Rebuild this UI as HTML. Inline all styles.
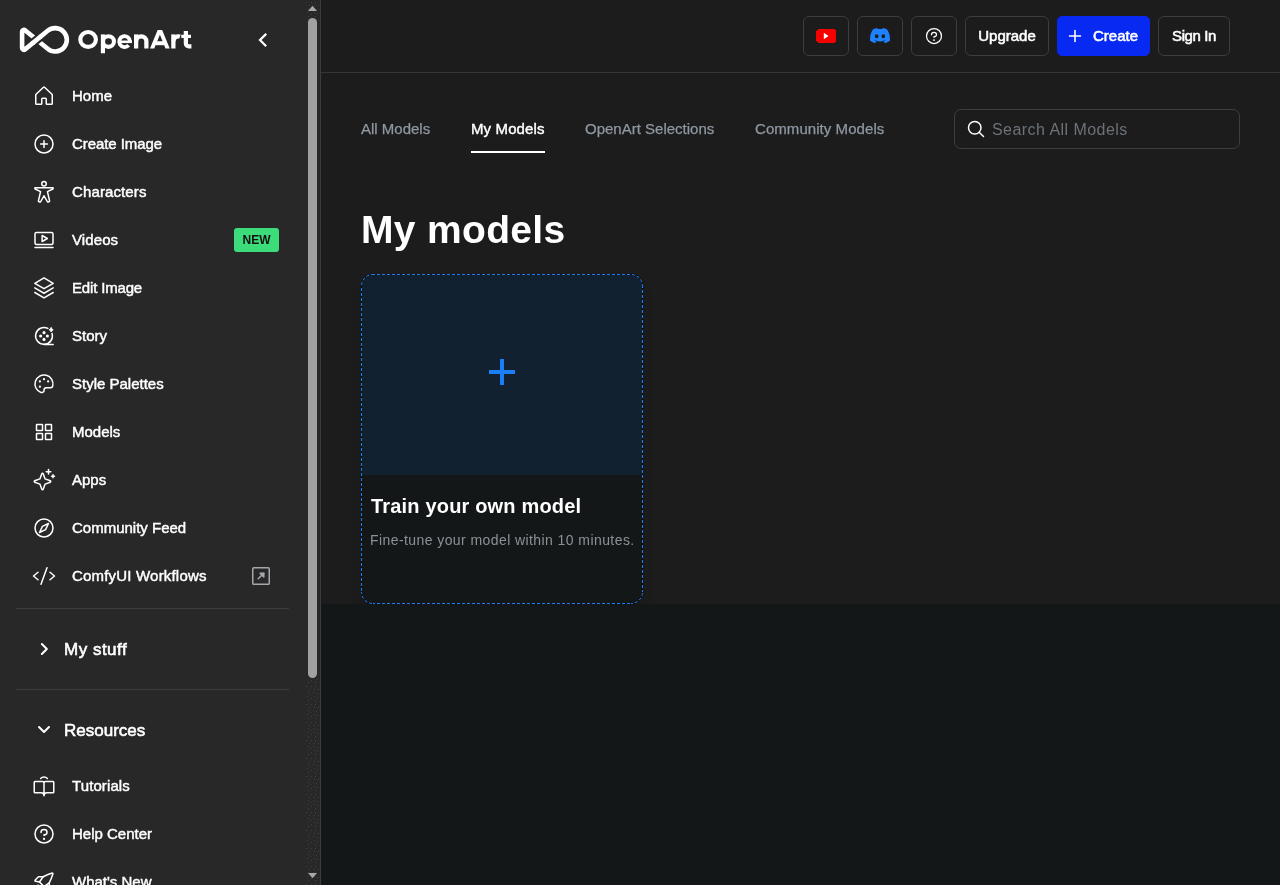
<!DOCTYPE html>
<html>
<head>
<meta charset="utf-8">
<title>My models - OpenArt</title>
<style>
*{box-sizing:border-box;margin:0;padding:0}
html,body{width:1280px;height:885px;overflow:hidden;background:#1c1c1c;font-family:"Liberation Sans",sans-serif;color:#fff}
.abs{position:absolute}
#side{position:absolute;left:0;top:0;width:320px;height:885px;background:#282828;overflow:hidden}
#sideborder{position:absolute;left:320px;top:0;width:1px;height:885px;background:#3a3d40}
#main{position:absolute;left:321px;top:0;width:959px;height:604px;background:#1c1c1c}
#foot{z-index:2;position:absolute;left:321px;top:604px;width:959px;height:281px;background:#131718}
#hline{position:absolute;left:321px;top:72px;width:959px;height:1px;background:#333638}
#logotxt{left:77px;top:22px;font-size:23.5px;line-height:34px;font-weight:bold;color:#fff;white-space:nowrap}
.nav{position:absolute;left:72px;font-size:15px;color:#fff;white-space:nowrap;line-height:20px;-webkit-text-stroke:0.45px #fff}
.ico{position:absolute;fill:none;stroke-linecap:round;stroke-linejoin:round;overflow:visible}
.sep{position:absolute;left:16px;width:273px;height:1px;background:#3b3e40}
.sec{position:absolute;left:64px;font-size:17px;line-height:22px;color:#fff;white-space:nowrap;-webkit-text-stroke:0.6px #fff}
.badge{position:absolute;left:234px;top:228px;width:45px;height:24px;border-radius:3px;background:#3ddc7a;color:#111;font-size:12px;font-weight:bold;line-height:24px;text-align:center}
.btn{position:absolute;top:16px;height:40px;border:1px solid #3b3e41;border-radius:6px;font-size:15px;line-height:38px;text-align:center;color:#fff;white-space:nowrap;-webkit-text-stroke:0.55px #fff}
#createbtn{background:#0829f2;border-color:#0829f2;border-radius:5px}
.btntxt{position:absolute;top:26px;font-size:15px;line-height:20px;color:#fff;white-space:nowrap;-webkit-text-stroke:0.55px #fff}
.tab{position:absolute;top:119px;font-size:15px;line-height:20px;color:#8f98a1;white-space:nowrap;-webkit-text-stroke:0.25px #8f98a1}
.tab.act{color:#fff;-webkit-text-stroke:0.4px #fff}
#search{left:954px;top:109px;width:286px;height:40px;border:1px solid #3b3e41;border-radius:7px}
#ph{left:992px;top:119px;font-size:16px;line-height:22px;color:#6c7278;white-space:nowrap;letter-spacing:0.45px}
#h1{left:361px;top:206px;font-size:39px;line-height:48px;font-weight:bold;color:#fff;white-space:nowrap;letter-spacing:0.33px}
#card{left:361px;top:274px;width:282px;height:330px;border-radius:12px;background:#0a0b0c;box-shadow:0 10px 15px -3px rgba(0,0,0,.12),0 4px 6px -4px rgba(0,0,0,.12)}
#cardin{position:absolute;left:1px;top:1px;width:280px;height:328px;border-radius:11px;background:#141718;overflow:hidden}
#cardtop{width:100%;height:200px;background:#12212f}
#ctitle{letter-spacing:0.18px;left:371px;top:494px;font-size:20px;line-height:24px;font-weight:bold;color:#fff;white-space:nowrap}
#csub{letter-spacing:0.42px;left:370px;top:530px;font-size:14px;line-height:20px;color:#8b9197;white-space:nowrap}

.nav,.sec,.btn,.btntxt,.tab,#ph,#h1,#ctitle,#csub,#logotxt,.badge{will-change:transform}

</style>
</head>
<body>
<div id="side">
<svg class="abs" style="left:14px;top:16px;width:70px;height:48px" viewBox="14 16 70 48" fill="none" stroke="#fff" stroke-width="4.6" stroke-linejoin="round" stroke-linecap="butt"><path d="M25.04,30.28 A1.8,1.8 0 0 0 22.10,31.67 L22.10,48.01 A1.8,1.8 0 0 0 25.04,49.40 L47.68,30.84 A11.7,11.7 0 1 1 47.68,48.84 Z"/><path d="M33.37,42.57 L40.03,37.11" stroke="#282828" stroke-width="8.8"/><path d="M32.37,43.39 L41.03,36.29"/></svg>
<svg class="abs" style="left:76px;top:24px;width:120px;height:34px" viewBox="76 24 120 34" fill="#fff" stroke="none">
<ellipse cx="88.1" cy="39.4" rx="7.8" ry="7.4" fill="none" stroke="#fff" stroke-width="4.15"/>
<rect x="100.85" y="34.4" width="4.15" height="18.85"/>
<ellipse cx="108.5" cy="41.55" rx="5.45" ry="5.3" fill="none" stroke="#fff" stroke-width="4.1"/>
<path d="M128.65,45.25 A5.45,5.45 0 1 1 130.05,41.6" fill="none" stroke="#fff" stroke-width="3.8"/>
<rect x="120.5" y="40.5" width="11.45" height="2.55"/>
<rect x="134" y="34.4" width="4.25" height="14.1"/>
<path d="M146.38,48.5 V41.5 A5.13,5.13 0 0 0 136.12,41.5" fill="none" stroke="#fff" stroke-width="4.25"/>
<path d="M150,48.5 L157.65,30 L162.15,30 L169.75,48.5 L165.55,48.5 L159.9,34.84 L154.25,48.5 Z"/>
<rect x="155.6" y="41.2" width="8.6" height="4"/>
<rect x="171.25" y="34.4" width="4.25" height="14.1"/>
<path d="M173.38,41.5 A5.13,5.13 0 0 1 180,36.59" fill="none" stroke="#fff" stroke-width="4.25"/>
<path d="M185.88,31 V43.5 A2.9,2.9 0 0 0 188.78,46.4 H191.4" fill="none" stroke="#fff" stroke-width="4.25"/>
<rect x="181.25" y="34.75" width="9.75" height="3.25"/>
</svg>
<svg class="abs" style="left:255px;top:32px;width:16px;height:16px;fill:none;stroke:#fff;stroke-width:2.2;stroke-linecap:square;stroke-linejoin:miter" viewBox="0 0 16 16"><polyline points="10.4 2.6 5 8 10.4 13.4"/></svg>
<svg class="ico" style="left:32px;top:84.0px;width:24px;height:24px;stroke:#fff;stroke-width:16;" viewBox="0 0 256 256"><path d="M152,208V160a8,8,0,0,0-8-8H112a8,8,0,0,0-8,8v48a8,8,0,0,1-8,8H48a8,8,0,0,1-8-8V115.54a8,8,0,0,1,2.62-5.92l80-75.54a8,8,0,0,1,10.77,0l80,75.54a8,8,0,0,1,2.62,5.92V208a8,8,0,0,1-8,8H160A8,8,0,0,1,152,208Z"/></svg>
<div class="nav" style="top:86px;letter-spacing:0px"><span>Home</span></div>
<svg class="ico" style="left:32px;top:132.0px;width:24px;height:24px;stroke:#fff;stroke-width:16;" viewBox="0 0 256 256"><circle cx="128" cy="128" r="96"/><line x1="92" y1="128" x2="164" y2="128"/><line x1="128" y1="92" x2="128" y2="164"/></svg>
<div class="nav" style="top:134px;letter-spacing:-0.08px"><span>Create Image</span></div>
<svg class="ico" style="left:32px;top:180.0px;width:24px;height:24px;stroke:#fff;stroke-width:16;" viewBox="0 0 256 256"><circle cx="128" cy="41" r="24"/><path d="M34,82 H222 Q230,89 222,96 L165,124 L188,226 Q178,240 164,232 L128,168 L92,232 Q78,240 68,226 L91,124 L34,96 Q26,89 34,82Z"/></svg>
<div class="nav" style="top:182px;letter-spacing:0.12px"><span>Characters</span></div>
<svg class="ico" style="left:32px;top:228.0px;width:24px;height:24px;stroke:#fff;stroke-width:16;" viewBox="0 0 256 256"><rect x="32" y="48" width="192" height="128" rx="16"/><line x1="32" y1="208" x2="224" y2="208"/><polygon points="108,80 164,112 108,144"/></svg>
<div class="nav" style="top:230px;letter-spacing:0.1px"><span>Videos</span></div>
<svg class="ico" style="left:32px;top:276.0px;width:24px;height:24px;stroke:#fff;stroke-width:16;" viewBox="0 0 256 256"><polyline points="30 176 128 234 226 176"/><polyline points="30 127 128 184 226 127"/><polygon points="30 78 128 135 226 78 128 20 30 78"/></svg>
<div class="nav" style="top:278px;letter-spacing:-0.17px"><span>Edit Image</span></div>
<svg class="ico" style="left:32px;top:324.0px;width:24px;height:24px;stroke:#fff;stroke-width:16;" viewBox="0 0 256 256"><path d="M170,47 A90,90 0 1 0 214,100"/><line x1="128" y1="218" x2="226" y2="218"/><circle cx="128" cy="92" r="16.5" fill="#fff" stroke="none"/><circle cx="92" cy="128" r="16.5" fill="#fff" stroke="none"/><circle cx="164" cy="128" r="16.5" fill="#fff" stroke="none"/><circle cx="128" cy="164" r="16.5" fill="#fff" stroke="none"/><path d="M204,40 Q209,57 226,62 Q209,67 204,84 Q199,67 182,62 Q199,57 204,40Z" fill="#fff" stroke-width="10"/></svg>
<div class="nav" style="top:326px;letter-spacing:0px"><span>Story</span></div>
<svg class="ico" style="left:32px;top:372.0px;width:24px;height:24px;stroke:#fff;stroke-width:16;" viewBox="0 0 256 256"><path d="M221.6,149.35A96,96,0,1,0,95.4,218.23c15.6,5.51,32.6-5.54,32.6-22.08V192a24,24,0,0,1,24-24h46.21A23.89,23.89,0,0,0,221.6,149.35Z"/><circle cx="128" cy="76" r="12" fill="#fff" stroke="none"/><circle cx="84" cy="100" r="12" fill="#fff" stroke="none"/><circle cx="84" cy="156" r="12" fill="#fff" stroke="none"/><circle cx="172" cy="100" r="12" fill="#fff" stroke="none"/></svg>
<div class="nav" style="top:374px;letter-spacing:0px"><span>Style Palettes</span></div>
<svg class="ico" style="left:32px;top:420.0px;width:24px;height:24px;stroke:#fff;stroke-width:16;" viewBox="0 0 256 256"><rect x="48" y="48" width="64" height="64" rx="4"/><rect x="144" y="48" width="64" height="64" rx="4"/><rect x="48" y="144" width="64" height="64" rx="4"/><rect x="144" y="144" width="64" height="64" rx="4"/></svg>
<div class="nav" style="top:422px;letter-spacing:0px"><span>Models</span></div>
<svg class="ico" style="left:32px;top:468.0px;width:24px;height:24px;stroke:#fff;stroke-width:16;" viewBox="0 0 256 256"><path d="M84.27,171.73l-55.09-20.3a7.92,7.92,0,0,1,0-14.86l55.09-20.3,20.3-55.09a7.92,7.92,0,0,1,14.86,0l20.3,55.09,55.09,20.3a7.92,7.92,0,0,1,0,14.86l-55.09,20.3-20.3,55.09a7.92,7.92,0,0,1-14.86,0Z"/><line x1="176" y1="16" x2="176" y2="64"/><line x1="200" y1="40" x2="152" y2="40"/><line x1="224" y1="72" x2="224" y2="104"/><line x1="240" y1="88" x2="208" y2="88"/></svg>
<div class="nav" style="top:470px;letter-spacing:0px"><span>Apps</span></div>
<svg class="ico" style="left:32px;top:516.0px;width:24px;height:24px;stroke:#fff;stroke-width:16;" viewBox="0 0 256 256"><circle cx="128" cy="128" r="96"/><polygon points="144.57 144.57 80 176 111.43 111.43 176 80 144.57 144.57"/></svg>
<div class="nav" style="top:518px;letter-spacing:0px"><span>Community Feed</span></div>
<svg class="ico" style="left:32px;top:564.0px;width:24px;height:24px;stroke:#fff;stroke-width:16;" viewBox="0 0 256 256"><polyline points="64 88 16 128 64 168"/><polyline points="192 88 240 128 192 168"/><line x1="160" y1="40" x2="96" y2="216"/></svg>
<div class="nav" style="top:566px;letter-spacing:0.19px"><span>ComfyUI Workflows</span></div>
<svg class="ico" style="left:32px;top:774.0px;width:24px;height:24px;stroke:#fff;stroke-width:16;" viewBox="0 0 256 256"><path d="M128,94 C128,86 122,80 112,80 H32 a8,8,0,0,0-8,8 V192 a8,8,0,0,0,8,8 H96 a32,32,0,0,1,32,32 V94 C128,86 134,80 144,80 H224 a8,8,0,0,1,8,8 V192 a8,8,0,0,1-8,8 H160 a32,32,0,0,0-32,32"/><path d="M92,48 A48.5,48.5 0 0 1 164,48"/></svg>
<div class="nav" style="top:776px;letter-spacing:0.1px"><span>Tutorials</span></div>
<svg class="ico" style="left:32px;top:822.0px;width:24px;height:24px;stroke:#fff;stroke-width:16;" viewBox="0 0 256 256"><circle cx="128" cy="128" r="96"/><circle cx="128" cy="180" r="12" fill="#fff" stroke="none"/><path d="M128,144v-8c17.67,0,32-12.54,32-28s-14.33-28-32-28S96,92.54,96,108v4"/></svg>
<div class="nav" style="top:824px;letter-spacing:0px"><span>Help Center</span></div>
<svg class="ico" style="left:32px;top:870.0px;width:24px;height:24px;stroke:#fff;stroke-width:16;" viewBox="0 0 256 256"><path d="M94.81,192C65.36,216.74,32,224,32,224s7.26-33.36,32-62.81"/><path d="M184,134.4V184a8,8,0,0,1-2.34,5.66l-32.31,32.31a8,8,0,0,1-13.5-4.09L128,176"/><path d="M121.6,72H72a8,8,0,0,0-5.66,2.340L34.03,106.65a8,8,0,0,0,4.09,13.5L80,128"/><path d="M223.3,40.6a8,8,0,0,0-8-8Q175,44,119.1,71.6L80,128l48,48L184.4,137Q212,81,223.3,40.6Z"/></svg>
<div class="nav" style="top:872px;letter-spacing:0px"><span>What's New</span></div>
<div class="badge">NEW</div>
<svg class="ico" style="left:249px;top:564.0px;width:24px;height:24px;stroke:#a4a8ac;stroke-width:16;" viewBox="0 0 256 256"><rect x="40" y="40" width="176" height="176" rx="12"/><polygon points="118 98 158 98 158 138" fill="#a4a8ac"/><line x1="98" y1="158" x2="158" y2="98"/></svg>
<div class="sep" style="top:608px"></div>
<svg class="abs" style="left:36px;top:641px;width:16px;height:16px;fill:none;stroke:#fff;stroke-width:2;stroke-linecap:round;stroke-linejoin:round" viewBox="0 0 16 16"><polyline points="5.85 3 10.85 8 5.85 13"/></svg>
<div class="sec" style="top:639px;letter-spacing:0.5px"><span>My stuff</span></div>
<div class="sep" style="top:689px"></div>
<svg class="abs" style="left:36px;top:721.4px;width:16px;height:16px;fill:none;stroke:#fff;stroke-width:2;stroke-linecap:round;stroke-linejoin:round" viewBox="0 0 16 16"><polyline points="3 6 8 11 13 6"/></svg>
<div class="sec" style="top:720px"><span>Resources</span></div>
<svg class="abs" style="left:306px;top:0;width:13px;height:885px" viewBox="0 0 13 885"><defs><pattern id="dz" width="13" height="18" patternUnits="userSpaceOnUse" fill="#3f4245"><rect x="0.0" y="2.0" width="1" height="1"/><rect x="5.0" y="2.0" width="1" height="1"/><rect x="9.0" y="2.0" width="1" height="1"/><rect x="3.0" y="5.0" width="1" height="1"/><rect x="8.0" y="5.0" width="1" height="1"/><rect x="12.0" y="5.0" width="1" height="1"/><rect x="2.0" y="8.0" width="1" height="1"/><rect x="7.0" y="8.0" width="1" height="1"/><rect x="10.0" y="9.0" width="1" height="1"/><rect x="4.0" y="10.0" width="1" height="1"/><rect x="1.0" y="12.0" width="1" height="1"/><rect x="8.0" y="12.0" width="1" height="1"/><rect x="11.0" y="13.0" width="1" height="1"/><rect x="5.0" y="14.0" width="1" height="1"/><rect x="2.0" y="16.0" width="1" height="1"/><rect x="9.0" y="16.0" width="1" height="1"/></pattern></defs><rect x="0" y="0" width="13" height="17" fill="url(#dz)"/><rect x="0" y="679" width="13" height="206" fill="url(#dz)"/></svg>
<div class="abs" style="left:308px;top:18px;width:9px;height:660px;border-radius:4.5px;background:#a1a1a1"></div>
<svg class="abs" style="left:308px;top:5px;width:9px;height:7px" viewBox="0 0 9 7"><polygon points="4.5,0.8 9,6 0,6" fill="#a8a8a8"/></svg>
<svg class="abs" style="left:308px;top:872px;width:9px;height:7px" viewBox="0 0 9 7"><polygon points="0,1 9,1 4.5,6.2" fill="#a8a8a8"/></svg>
</div>
<div id="sideborder"></div>
<div id="main"></div>
<div id="foot"></div>
<div id="hline"></div>
<div class="btn" style="left:803px;width:46px"></div>
<svg class="abs" style="left:816px;top:29px;width:20px;height:14px" viewBox="0 0 20 14" shape-rendering="crispEdges"><path d="M2,0H18L20,2V12L18,14H2L0,12V2Z" fill="#f70000"/><polygon points="7.8,3.7 12.5,7 7.8,10.3" fill="#fff" shape-rendering="geometricPrecision"/></svg>
<div class="btn" style="left:857px;width:46px"></div>
<svg class="abs" style="left:870px;top:28.3px;width:20px;height:15.2px" viewBox="0 0 127.14 96.36"><path d="M107.7,8.07A105.15,105.15,0,0,0,81.47,0a72.06,72.06,0,0,0-3.36,6.83A97.68,97.68,0,0,0,49,6.83,72.37,72.37,0,0,0,45.64,0,105.89,105.89,0,0,0,19.39,8.09C2.79,32.65-1.71,56.6.54,80.21h0A105.73,105.73,0,0,0,32.71,96.36,77.7,77.7,0,0,0,39.6,85.25a68.42,68.42,0,0,1-10.85-5.18c.91-.66,1.8-1.34,2.66-2a75.57,75.57,0,0,0,64.32,0c.87.71,1.76,1.39,2.66,2a68.68,68.68,0,0,1-10.87,5.19,77,77,0,0,0,6.89,11.1A105.25,105.25,0,0,0,126.6,80.22h0C129.24,52.84,122.09,29.11,107.7,8.07ZM42.45,65.69C36.18,65.69,31,60,31,53s5-12.74,11.43-12.74S54,46,53.89,53,48.84,65.69,42.45,65.69Zm42.24,0C78.41,65.69,73.25,60,73.25,53s5-12.74,11.44-12.74S96.23,46,96.12,53,91.08,65.69,84.69,65.69Z" fill="#1e82ff"/></svg>
<div class="btn" style="left:911px;width:46px"></div>
<svg class="ico" style="left:924px;top:26.0px;width:20px;height:20px;stroke:#fff;stroke-width:16;" viewBox="0 0 256 256"><circle cx="128" cy="128" r="96"/><circle cx="128" cy="180" r="12" fill="#fff" stroke="none"/><path d="M128,144v-8c17.67,0,32-12.54,32-28s-14.33-28-32-28S96,92.54,96,108v4"/></svg>
<div class="btn" style="left:965px;width:84px"><span>Upgrade</span></div>
<div class="btn" id="createbtn" style="left:1057px;width:93px"></div>
<svg class="ico" style="left:1067px;top:28.0px;width:16px;height:16px;stroke:#fff;stroke-width:25;" viewBox="0 0 256 256"><line x1="40" y1="128" x2="216" y2="128"/><line x1="128" y1="40" x2="128" y2="216"/></svg>
<div class="btntxt" style="left:1093px"><span>Create</span></div>
<div class="btn" style="left:1158px;width:72px;letter-spacing:-0.4px"><span>Sign In</span></div>
<div class="tab" style="left:361px"><span>All Models</span></div>
<div class="tab act" style="left:471px;letter-spacing:0.12px"><span>My Models</span></div>
<div class="abs" style="left:471px;top:151px;width:74px;height:2px;background:#fff"></div>
<div class="tab" style="left:585px"><span>OpenArt Selections</span></div>
<div class="tab" style="left:755px;letter-spacing:0.06px"><span>Community Models</span></div>
<div class="abs" id="search"></div>
<svg class="ico" style="left:966px;top:119.0px;width:20px;height:20px;stroke:#fff;stroke-width:19;" viewBox="0 0 256 256"><circle cx="112" cy="112" r="80"/><line x1="168.57" y1="168.57" x2="224" y2="224"/></svg>
<div class="abs" id="ph"><span>Search All Models</span></div>
<div class="abs" id="h1"><span>My models</span></div>
<div class="abs" id="card"><div id="cardin"><div id="cardtop"></div></div></div>
<svg class="abs" style="left:361px;top:274px;width:282px;height:330px" viewBox="0 0 282 330" fill="none" stroke="#1b7ef7" stroke-width="1" stroke-dasharray="3 2">
<line x1="12" y1="0.5" x2="270" y2="0.5" stroke-dashoffset="1" shape-rendering="crispEdges"/>
<line x1="12" y1="329.5" x2="270" y2="329.5" stroke-dashoffset="1" shape-rendering="crispEdges"/>
<line x1="0.5" y1="12" x2="0.5" y2="318" stroke-dashoffset="3" shape-rendering="crispEdges"/>
<line x1="281.5" y1="12" x2="281.5" y2="318" stroke-dashoffset="1" shape-rendering="crispEdges"/>
<path d="M0.5,12 A11.5,11.5 0 0 1 12,0.5" stroke-dashoffset="4"/>
<path d="M270,0.5 A11.5,11.5 0 0 1 281.5,12" stroke-dashoffset="4"/>
<path d="M281.5,318 A11.5,11.5 0 0 1 270,329.5" stroke-dashoffset="4"/>
<path d="M12,329.5 A11.5,11.5 0 0 1 0.5,318" stroke-dashoffset="4"/>
</svg>
<div class="abs" style="left:489px;top:370px;width:26px;height:4px;background:#1b7ef7"></div><div class="abs" style="left:500px;top:359px;width:4px;height:26px;background:#1b7ef7"></div>
<div class="abs" id="ctitle"><span>Train your own model</span></div>
<div class="abs" id="csub"><span>Fine-tune your model within 10 minutes.</span></div>
</body>
</html>
